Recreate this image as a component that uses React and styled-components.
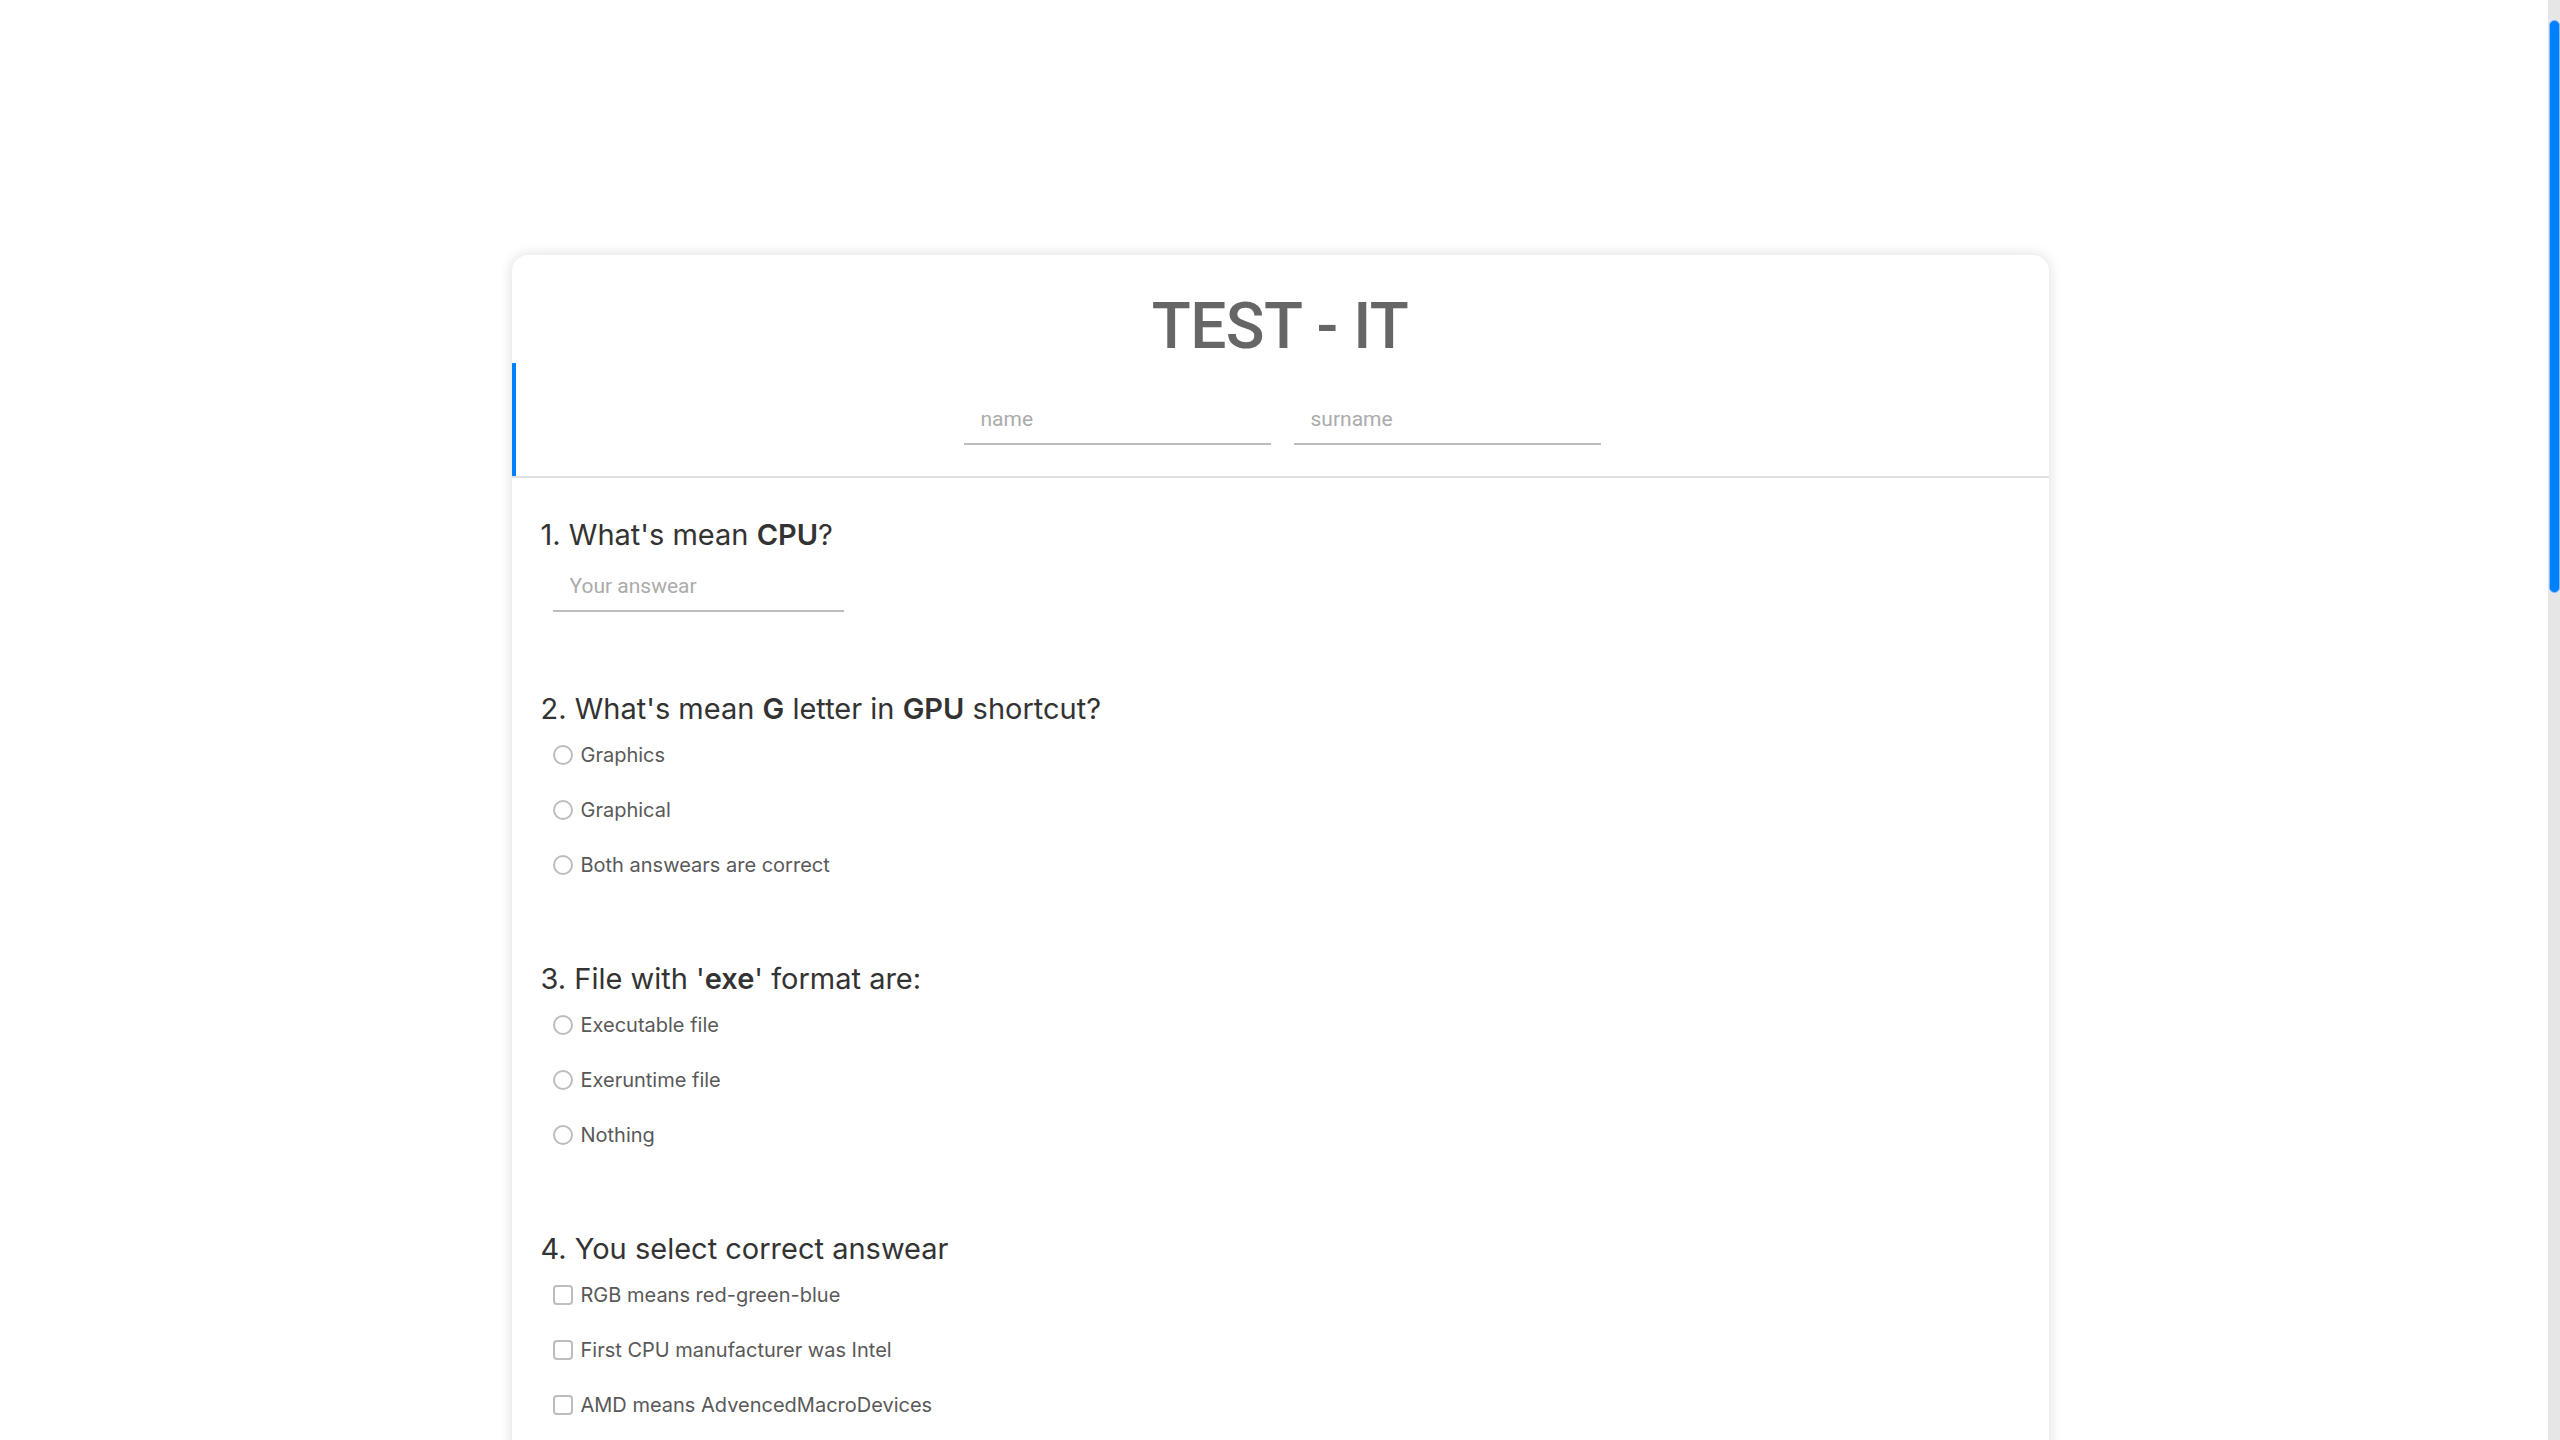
import React from "react";
import styled, { createGlobalStyle } from "styled-components";

const GlobalStyle = createGlobalStyle`
  html, body {
    margin: 0;
    padding: 0;
    background: #ffffff;
  }
  body {
    font-family: "Inter", "Noto Sans", sans-serif;
  }
  html {
    scrollbar-width: none;
  }
  ::-webkit-scrollbar {
    display: none;
  }
`;

const Page = styled.div`
  box-sizing: border-box;
  min-height: 3520px;
  padding: 255px 0 120px;
`;

const ScrollTrack = styled.div`
  position: fixed;
  top: 0;
  right: 0;
  width: 12px;
  height: 100vh;
  background: #e6e6e6;
  z-index: 10;
`;

const ScrollThumb = styled.div`
  box-sizing: border-box;
  margin: 20px 0 0 1px;
  width: 11px;
  height: 573px;
  background: #0080ff;
  border: 1px solid #7dbcff;
  border-radius: 6px;
`;

const Card = styled.form`
  width: 1537px;
  margin: 0 auto;
  background: #ffffff;
  border-radius: 16px;
  box-shadow: 0 0 14px rgba(0, 0, 0, 0.14);
  overflow: hidden;
`;

const Header = styled.header`
  border-bottom: 2px solid #e0e0e0;
`;

const Title = styled.h1`
  margin: 0;
  padding-top: 36px;
  line-height: 72px;
  font-family: "Roboto", "Liberation Sans", sans-serif;
  font-weight: 500;
  font-size: 64px;
  letter-spacing: -0.5px;
  color: #666666;
  text-align: center;
`;

const NameRow = styled.div`
  display: flex;
  justify-content: center;
  gap: 23px;
  padding: 32px 0 31px;
  border-left: 4px solid #0080ff;
`;

const LineInput = styled.input`
  box-sizing: border-box;
  width: ${(p) => p.$w}px;
  height: 50px;
  margin: 0;
  padding: 0 17px;
  border: none;
  border-bottom: 2px solid #bdbdbd;
  background: transparent;
  font-family: "Roboto", "Liberation Sans", sans-serif;
  font-size: 21px;
  color: #444;
  outline: none;
  &::placeholder {
    color: #ababab;
  }
`;

const Questions = styled.div`
  display: flex;
  flex-direction: column;
  gap: 80px;
  padding: 40px 29px 90px;
`;

const Question = styled.section`
  display: flex;
  flex-direction: column;
`;

const Heading = styled.h2`
  margin: 0;
  font-family: "Inter", "Noto Sans", sans-serif;
  font-weight: 400;
  font-size: 29px;
  line-height: 34px;
  color: #333333;
  b {
    font-weight: 600;
  }
`;

const AnswerField = styled.div`
  margin: 10px 0 0 12px;
`;

const OptionList = styled.div`
  display: flex;
  flex-direction: column;
  gap: 31px;
  margin: 17px 0 5px 12px;
`;

const Option = styled.label`
  display: flex;
  align-items: center;
  gap: 8px;
  height: 24px;
  font-family: "Inter", "Noto Sans", sans-serif;
  font-size: 20px;
  color: #595959;
`;

const Mark = styled.input`
  appearance: none;
  box-sizing: border-box;
  flex: none;
  width: 20px;
  height: 20px;
  margin: 0;
  border: 2.5px solid #bdbdbd;
  border-radius: ${(p) => (p.type === "radio" ? "50%" : "4px")};
  background: #fff;
`;

const Submit = styled.button`
  align-self: flex-start;
  margin-left: 12px;
  padding: 14px 40px;
  border: none;
  border-radius: 6px;
  background: #0080ff;
  color: #fff;
  font-family: "Inter", "Noto Sans", sans-serif;
  font-size: 20px;
  font-weight: 500;
`;

const questions = [
  {
    id: "q1",
    title: (
      <>
        1. What's mean <b>CPU</b>?
      </>
    ),
    kind: "text",
  },
  {
    id: "q2",
    title: (
      <>
        2. What's mean <b>G</b> letter in <b>GPU</b> shortcut?
      </>
    ),
    kind: "radio",
    options: ["Graphics", "Graphical", "Both answears are correct"],
  },
  {
    id: "q3",
    title: (
      <>
        3. File with '<b>exe</b>' format are:
      </>
    ),
    kind: "radio",
    options: ["Executable file", "Exeruntime file", "Nothing"],
  },
  {
    id: "q4",
    title: <>4. You select correct answear</>,
    kind: "checkbox",
    options: [
      "RGB means red-green-blue",
      "First CPU manufacturer was Intel",
      "AMD means AdvencedMacroDevices",
    ],
  },
  {
    id: "q5",
    title: (
      <>
        5. What's mean <b>RAM</b>?
      </>
    ),
    kind: "text",
  },
  {
    id: "q6",
    title: (
      <>
        6. <b>HDD</b> is:
      </>
    ),
    kind: "radio",
    options: ["Hard disk drive", "High data device", "Nothing"],
  },
];

export default function App() {
  return (
    <>
      <GlobalStyle />
      <ScrollTrack aria-hidden="true">
        <ScrollThumb />
      </ScrollTrack>
      <Page>
        <Card onSubmit={(e) => e.preventDefault()}>
          <Header>
            <Title>TEST - IT</Title>
            <NameRow>
              <LineInput $w={307} placeholder="name" />
              <LineInput $w={307} placeholder="surname" />
            </NameRow>
          </Header>
          <Questions>
            {questions.map((q) => (
              <Question key={q.id}>
                <Heading>{q.title}</Heading>
                {q.kind === "text" ? (
                  <AnswerField>
                    <LineInput $w={291} placeholder="Your answear" />
                  </AnswerField>
                ) : (
                  <OptionList>
                    {q.options.map((o) => (
                      <Option key={o}>
                        <Mark type={q.kind} name={q.id} />
                        {o}
                      </Option>
                    ))}
                  </OptionList>
                )}
              </Question>
            ))}
            <Submit type="submit">Send</Submit>
          </Questions>
        </Card>
      </Page>
    </>
  );
}
